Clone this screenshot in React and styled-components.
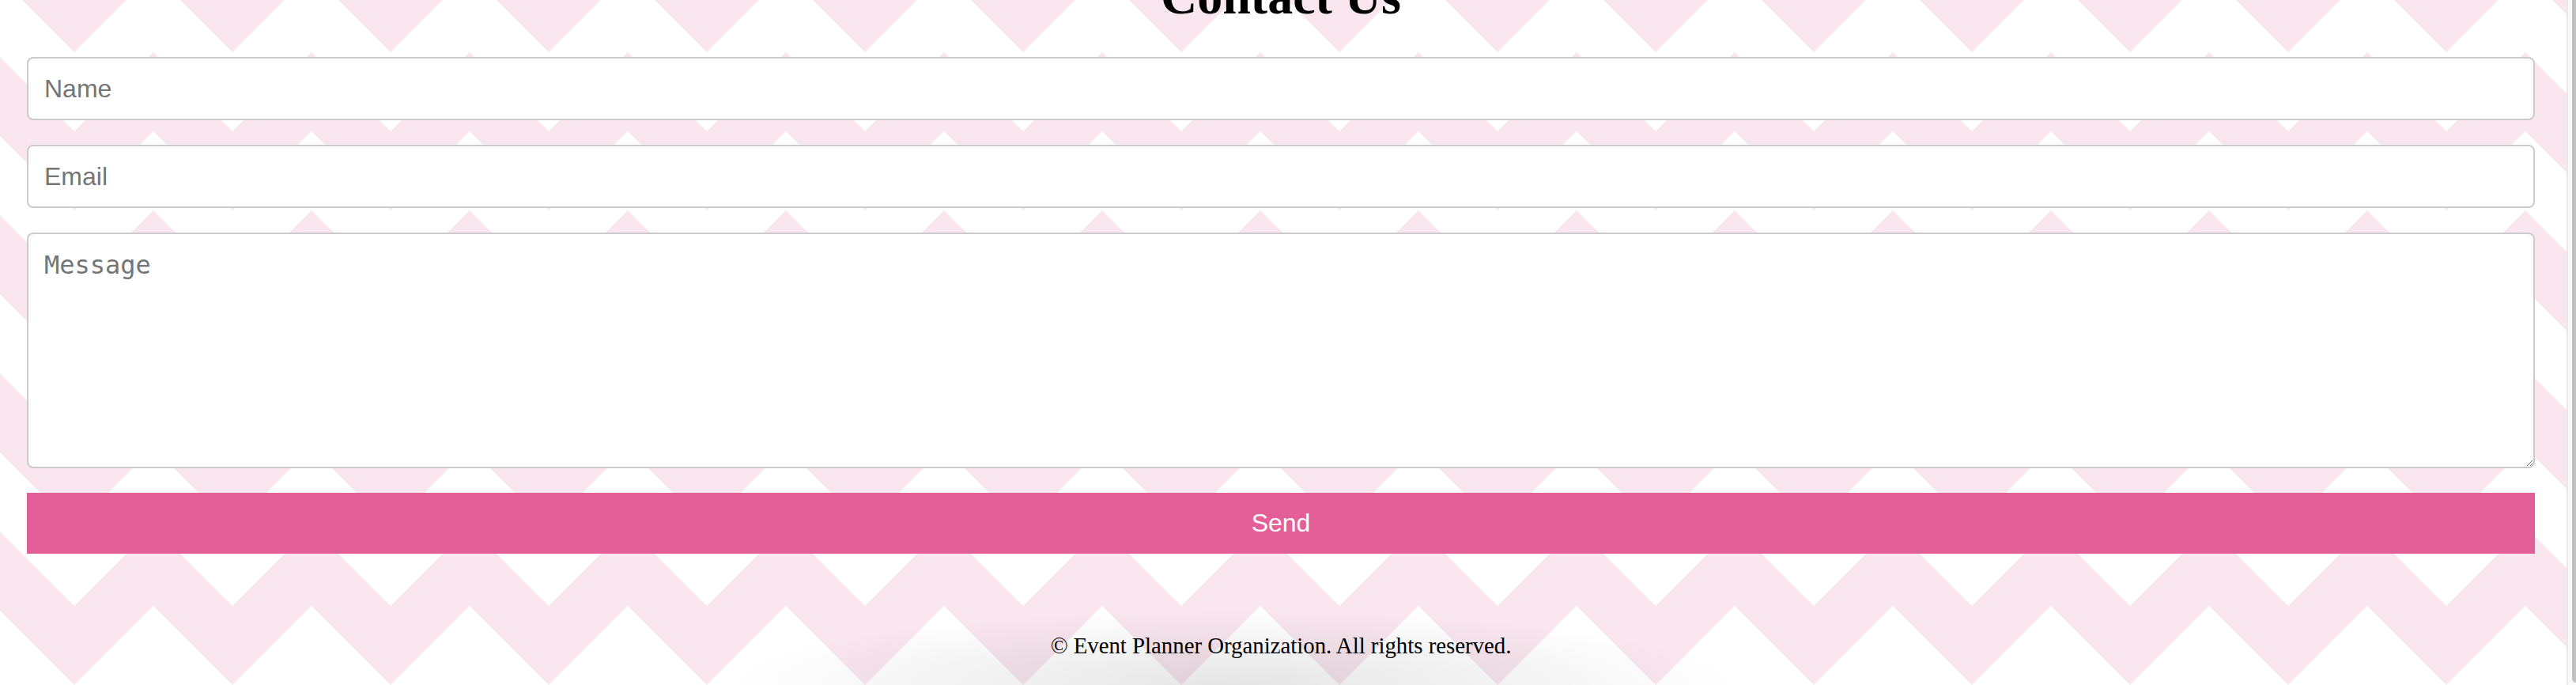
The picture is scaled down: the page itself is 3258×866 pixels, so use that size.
import React from "react"
import styled, { createGlobalStyle } from "styled-components"

const chevronTile = "<svg xmlns='http://www.w3.org/2000/svg' width='200' height='200'><polygon points='0,100 100,0 200,100 200,200 100,100 0,200' fill='#f9e6ef'/></svg>"
const chevron = `url("data:image/svg+xml,${encodeURIComponent(chevronTile)}")`

const GlobalStyle = createGlobalStyle`
  html, body {
    margin: 0;
    height: 866px;
    overflow: hidden;
    background: #fff;
  }
`

const Page = styled.div`
  display: flex;
  height: 866px;
`

const Main = styled.main`
  flex: 1;
  display: flex;
  flex-direction: column;
  overflow: hidden;
  background: #fff ${chevron} 94px 66px repeat;
`

const ContactSection = styled.section`
  display: flex;
  flex-direction: column;
  padding: 0 40px 0 34px;
`

const Title = styled.h2`
  margin: -40px 0 41px;
  font-family: "Liberation Serif", "Times New Roman", serif;
  font-size: 64px;
  font-weight: bold;
  line-height: 71px;
  text-align: center;
  color: #000;
`

const Form = styled.form`
  display: flex;
  flex-direction: column;
  gap: 31px;
`

const Field = styled.input`
  box-sizing: border-box;
  width: 100%;
  height: 80px;
  margin: 0;
  padding: 0 20px;
  border: 2px solid #cbcbcb;
  border-radius: 8px;
  background: #fff;
  font-family: "Liberation Sans", Arial, sans-serif;
  font-size: 32px;
  color: #222;
  outline: none;

  &::placeholder {
    color: #757575;
  }
`

const MessageBox = styled.textarea`
  box-sizing: border-box;
  display: block;
  width: 100%;
  height: 298px;
  margin: 0;
  padding: 20px;
  border: 2px solid #cbcbcb;
  border-radius: 8px;
  background: #fff;
  font-family: "DejaVu Sans Mono", "Liberation Mono", monospace;
  font-size: 32px;
  color: #222;
  resize: vertical;
  outline: none;

  &::placeholder {
    color: #757575;
  }
`

const SendButton = styled.button`
  height: 77px;
  margin: 0;
  padding: 0;
  border: none;
  border-radius: 0;
  background: #e45f98;
  color: #fff;
  font-family: "Liberation Sans", Arial, sans-serif;
  font-size: 32px;
  cursor: pointer;
`

const Footer = styled.footer`
  flex: 1;
  padding: 100px 40px 0 34px;
  text-align: center;
  font-family: "Liberation Serif", "Times New Roman", serif;
  font-size: 28.8px;
  color: #000;
  background: radial-gradient(ellipse 640px 95px at 1558px 100%, rgba(0, 0, 0, 0.1), rgba(0, 0, 0, 0));
`

const ScrollTrack = styled.div`
  flex: none;
  box-sizing: border-box;
  width: 12px;
  display: flex;
  justify-content: flex-end;
  background: #f9f9f9;
  border-left: 2px solid #e9e9e9;
`

const Thumb = styled.div`
  width: 5px;
  height: 863px;
  background: #c1c1c1;
  border-radius: 0 0 0 5px;
`

const App = () => {
  return (
    <>
      <GlobalStyle />
      <Page>
        <Main>
          <ContactSection>
            <Title>Contact Us</Title>
            <Form onSubmit={(e) => e.preventDefault()}>
              <Field type="text" placeholder="Name" />
              <Field type="email" placeholder="Email" />
              <MessageBox placeholder="Message" />
              <SendButton type="submit">Send</SendButton>
            </Form>
          </ContactSection>
          <Footer>© Event Planner Organization. All rights reserved.</Footer>
        </Main>
        <ScrollTrack>
          <Thumb />
        </ScrollTrack>
      </Page>
    </>
  )
}

export default App
